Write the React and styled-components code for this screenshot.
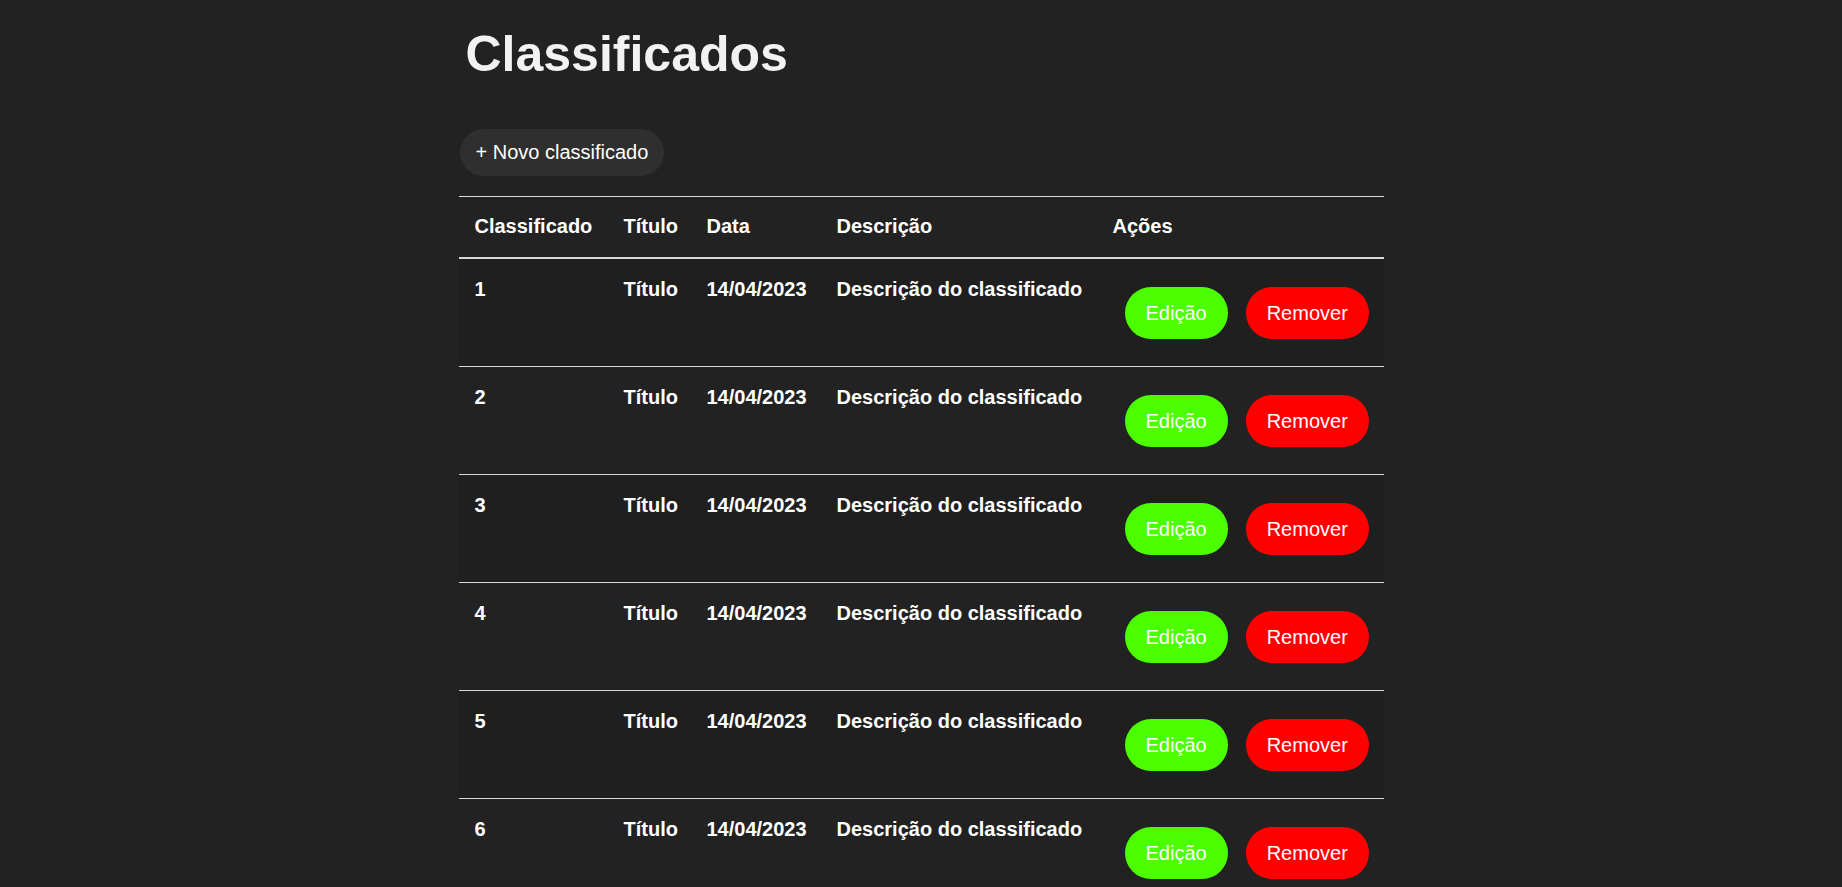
import React from "react";
import styled, { createGlobalStyle } from "styled-components";

const GlobalStyle = createGlobalStyle`
  html, body {
    margin: 0;
    padding: 0;
    background: #222222;
  }
  body {
    font-family: "Liberation Sans", Arial, Helvetica, sans-serif;
    color: #ffffff;
  }
  * { box-sizing: border-box; }
`;

const Page = styled.main`
  width: 925px;
  margin: 0 auto;
  padding-top: 26px;
`;

const Title = styled.h1`
  margin: 0 0 0 7px;
  font-size: 50px;
  line-height: 56px;
  font-weight: 700;
  color: #f2f2f2;
`;

const Toolbar = styled.div`
  display: flex;
  margin-top: 47px;
  padding-left: 1px;
`;

const NewButton = styled.button`
  font-family: inherit;
  font-size: 20px;
  line-height: 23px;
  height: 47px;
  padding: 0 16px;
  border: none;
  border-radius: 24px;
  background: #2f2f2f;
  color: #ffffff;
  cursor: pointer;
`;

const Table = styled.div`
  margin-top: 20px;
  border-top: 1px solid #d9d9d9;
`;

const columns = "149px 83px 130px 276px 1fr";

const HeaderRow = styled.div`
  display: grid;
  grid-template-columns: ${columns};
  border-bottom: 2px solid #d9d9d9;
`;

const HeaderCell = styled.div`
  padding: 18px 14px 19px 16px;
  font-size: 20px;
  line-height: 23px;
  font-weight: 700;
  color: #ffffff;
  white-space: nowrap;
`;

const Row = styled.div`
  display: grid;
  grid-template-columns: ${columns};
  background: ${(p) => (p.$odd ? "#1f1f1f" : "#222222")};
  border-bottom: 1px solid #d9d9d9;
`;

const Cell = styled.div`
  padding: 19px 14px 0 16px;
  font-size: 20px;
  line-height: 23px;
  font-weight: 700;
  color: #ffffff;
  white-space: nowrap;
`;

const Actions = styled.div`
  display: flex;
  align-items: center;
  gap: 18px;
  padding: 28px 15px 27px 28px;
`;

const ActionButton = styled.button`
  font-family: inherit;
  font-size: 20px;
  line-height: 23px;
  height: 52px;
  padding: 0 21px;
  border: none;
  border-radius: 26px;
  color: #ffffff;
  background: ${(p) => (p.$variant === "danger" ? "#ff0000" : "#4cff00")};
  cursor: pointer;
`;

const items = [1, 2, 3, 4, 5, 6].map((id) => ({
  id,
  titulo: "Título",
  data: "14/04/2023",
  descricao: "Descrição do classificado",
}));

export default function App() {
  return (
    <>
      <GlobalStyle />
      <Page>
        <Title>Classificados</Title>
        <Toolbar>
          <NewButton>+ Novo classificado</NewButton>
        </Toolbar>
        <Table>
          <HeaderRow>
            <HeaderCell>Classificado</HeaderCell>
            <HeaderCell>Título</HeaderCell>
            <HeaderCell>Data</HeaderCell>
            <HeaderCell>Descrição</HeaderCell>
            <HeaderCell>Ações</HeaderCell>
          </HeaderRow>
          {items.map((item, i) => (
            <Row key={item.id} $odd={i % 2 === 0}>
              <Cell>{item.id}</Cell>
              <Cell>{item.titulo}</Cell>
              <Cell>{item.data}</Cell>
              <Cell>{item.descricao}</Cell>
              <Actions>
                <ActionButton>Edição</ActionButton>
                <ActionButton $variant="danger">Remover</ActionButton>
              </Actions>
            </Row>
          ))}
        </Table>
      </Page>
    </>
  );
}
